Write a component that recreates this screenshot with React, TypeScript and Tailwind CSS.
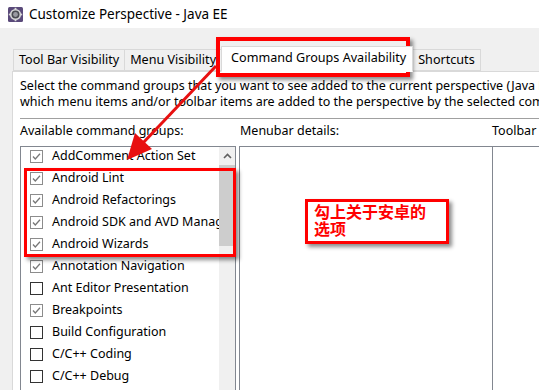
import React from "react";

type Item = { label: string; checked: boolean };

const items: Item[] = [
    { label: "AddComment Action Set", checked: true },
    { label: "Android Lint", checked: true },
    { label: "Android Refactorings", checked: true },
    { label: "Android SDK and AVD Manager", checked: true },
    { label: "Android Wizards", checked: true },
    { label: "Annotation Navigation", checked: true },
    { label: "Ant Editor Presentation", checked: false },
    { label: "Breakpoints", checked: true },
    { label: "Build Configuration", checked: false },
    { label: "C/C++ Coding", checked: false },
    { label: "C/C++ Debug", checked: false },
    { label: "C/C++ Editor", checked: false },
];

const CheckBox = ({ checked }: { checked: boolean }) => (
    <svg width="13" height="13" viewBox="0 0 13 13" className="shrink-0">
        <rect
            x="0.5"
            y="0.5"
            width="12"
            height="12"
            fill="#fff"
            stroke={checked ? "#8c8c8c" : "#333"}
        />
        {checked && (
            <path d="M3 6.5 L5.3 9 L10 3.8" fill="none" stroke="#777" strokeWidth="1.3" />
        )}
    </svg>
);

const AppIcon = () => (
    <svg width="15" height="15" viewBox="0 0 15 15">
        <rect x="0" y="0" width="15" height="15" rx="1.5" fill="#5a4a7a" />
        <circle cx="7.5" cy="7.5" r="5.6" fill="#d8d8d8" />
        <circle cx="7.5" cy="7.5" r="4" fill="#4a4a52" />
        <circle cx="7.5" cy="7.5" r="2.4" fill="#9a9aa2" />
        <g fill="#d8d8d8">
            <rect x="6.6" y="0.8" width="1.8" height="2.2" />
            <rect x="6.6" y="12" width="1.8" height="2.2" />
            <rect x="0.8" y="6.6" width="2.2" height="1.8" />
            <rect x="12" y="6.6" width="2.2" height="1.8" />
        </g>
    </svg>
);

const Tab = ({ label, active }: { label: string; active?: boolean }) => (
    <div
        className={
            active
                ? "h-[26px] -mb-px bg-white border border-[#d9d9d9] border-b-white pl-[9px] pr-[6px] pt-[3px] relative z-10 -ml-px"
                : "h-[22px] bg-[#f0f0f0] border border-[#d9d9d9] px-[5px] pt-[2px] -ml-px"
        }
    >
        {label}
    </div>
);

export default function App() {
    return (
        <div className="w-[539px] h-[390px] overflow-hidden bg-[#f0f0f0] relative text-[12.5px] text-black font-['Noto_Sans',sans-serif] leading-[16px]">
            {/* title bar */}
            <div className="h-[28px] bg-white flex items-center pl-[8px] gap-[6px]">
                <AppIcon />
                <span className="text-[13.5px]">Customize Perspective - Java EE</span>
            </div>

            <div className="pl-[12px] pt-[18px]">
                {/* tabs */}
                <div className="flex items-end pl-[2px] whitespace-nowrap text-[12.6px]">
                    <Tab label="Tool Bar Visibility" />
                    <Tab label="Menu Visibility" />
                    <Tab label="Command Groups Availability" active />
                    <Tab label="Shortcuts" />
                </div>

                {/* panel */}
                <div className="bg-white border border-[#d9d9d9] border-r-0 h-[340px] pl-[7px] pt-[6px] whitespace-nowrap overflow-hidden">
                    <div>Select the command groups that you want to see added to the current perspective (Java EE). The details field identifies</div>
                    <div>which menu items and/or toolbar items are added to the perspective by the selected command group.</div>
                    <div className="border-t border-[#a0a0a0] mt-[8px] h-0" />

                    <div className="flex pt-[4px]">
                        <div className="w-[216px] shrink-0">
                            <div className="h-[23px]">Available command groups:</div>
                        </div>
                        <div className="w-[253px] shrink-0 pl-[4px]">
                            <div className="h-[23px]">Menubar details:</div>
                        </div>
                        <div className="pl-[3px]">
                            <div className="h-[23px]">Toolbar details:</div>
                        </div>
                    </div>

                    <div className="flex">
                        {/* list */}
                        <div className="w-[216px] h-[260px] shrink-0 border border-[#828790] flex">
                            <div className="flex-1 overflow-hidden">
                                <div className="-mt-[2px]">
                                    {items.map((it) => (
                                        <div key={it.label} className="h-[22px] flex items-center pl-[9px] gap-[9px]">
                                            <CheckBox checked={it.checked} />
                                            <span>{it.label}</span>
                                        </div>
                                    ))}
                                </div>
                            </div>
                            <div className="w-[16px] bg-[#f0f0f0] flex flex-col items-center">
                                <div className="h-[18px] flex items-center">
                                    <svg width="9" height="6" viewBox="0 0 9 6">
                                        <path d="M1 5 L4.5 1.5 L8 5" fill="none" stroke="#606060" strokeWidth="1.6" />
                                    </svg>
                                </div>
                                <div className="w-[16px] h-[81px] bg-[#cdcdcd]" />
                            </div>
                        </div>
                        <div className="w-[3px] shrink-0" />
                        {/* menubar details */}
                        <div className="w-[254px] h-[260px] shrink-0 border border-[#828790]" />
                        {/* toolbar details */}
                        <div className="flex-1 h-[260px] border border-l-0 border-r-0 border-[#828790]" />
                    </div>
                </div>
            </div>

            {/* annotations */}
            <div className="absolute left-[216px] top-[37px] w-[194px] h-[40px] border-[4px] border-[#ff0000] shadow-[3px_3px_4px_rgba(0,0,0,0.45)]" />
            <div className="absolute left-[24px] top-[168px] w-[212px] h-[89px] border-[3px] border-[#ff0000] shadow-[3px_3px_4px_rgba(0,0,0,0.45)]" />
            <svg className="absolute left-0 top-0 pointer-events-none" width="539" height="390">
                <line x1="216" y1="66" x2="142" y2="144" stroke="#e81010" strokeWidth="3" />
                <polygon points="127,160 135,133 152,149" fill="#e81010" />
            </svg>
            <div className="absolute left-[305px] top-[199px] w-[144px] h-[45px] bg-white border-[3px] border-[#ff0000] shadow-[3px_3px_4px_rgba(0,0,0,0.45)] px-[6px] pt-[1px]">
                <div className="text-[#ff0000] font-bold text-[16px] leading-[17px] font-['Noto_Sans_CJK_SC',sans-serif]">
                    勾上关于安卓的
                    <br />
                    选项
                </div>
            </div>
        </div>
    );
}
